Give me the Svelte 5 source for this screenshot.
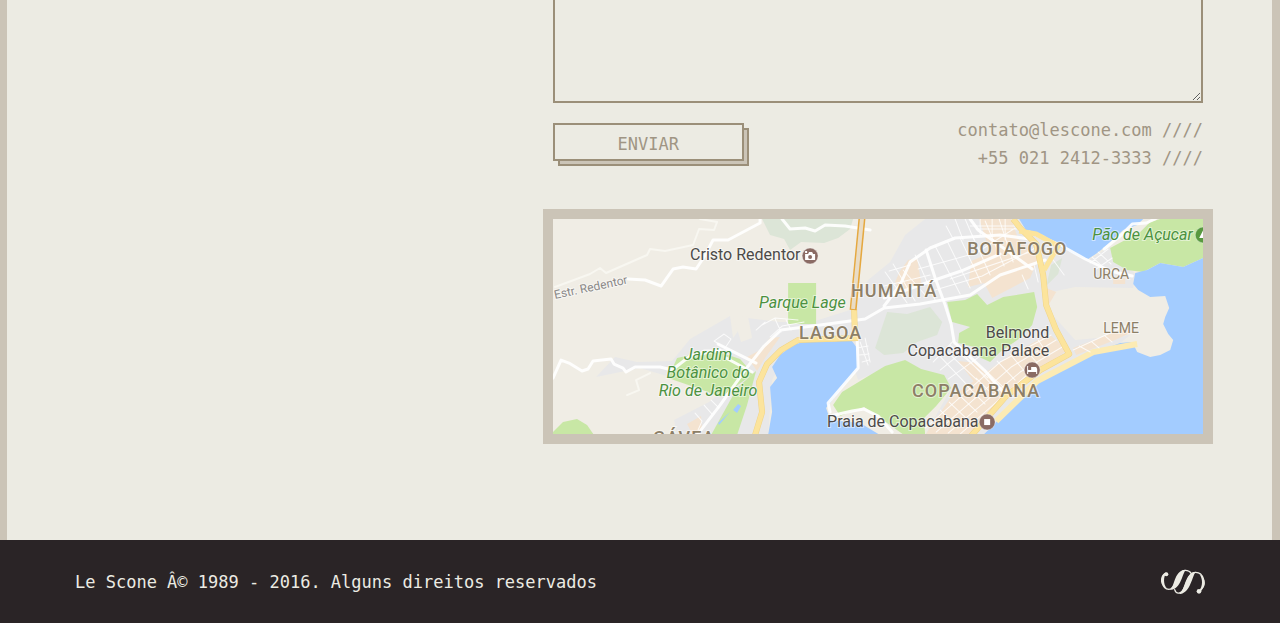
<script lang="ts">
  let message = $state('');

  const roads = [
    'M553 378 L561 360 L569 363 L582 371 L588 369 L593 361 L611 359 L614 364 L623 368 L626 372 L635 367 L660 367 L672 370 L690 356 L720 350',
    'M628 279 L645 280 L661 286 L673 269 L683 267 L696 269 L704 257 L713 240 L728 240 L760 223 V219',
    'M782 219 L790 229 L805 228 L815 231 L825 225 L845 226 L870 230',
    'M697 435 L720 405 L745 370 L764 346 L781 330 L820 325 L865 319 L884 308 L920 304 L970 295 L1000 275 L1045 260',
    'M884 306 L900 285 L910 262 L930 248 L955 238 L1000 235 L1030 239',
    'M718 344 L756 363 M726 358 L752 372',
    'M857 338 L858 368 L828 403 L830 412',
    'M830 416 L852 411 L864 409 L878 416 L892 432',
    'M926 250 L935 278 L945 305 L951 324 L954 342 L984 370 L1003 392',
    'M1029 232 L1060 245 L1085 259 L1110 271 L1132 276',
    'M1104 249 L1121 235 L1132 224 L1146 223 L1155 219',
    'M884 298 L920 285 L961 271 L1000 254 M970 219 L978 230 L1006 250 L1032 269'
  ];

  const lanes = [
    'M770 337 L782 326 L804 322 M762 325 L775 318 L798 320 M756 330 L765 322 M775 319 L781 332 M786 320 L791 330',
    'M714 341 L724 334 L731 339 L725 348 Z M690 359 L704 350 L730 350',
    'M695 413 L702 421 L698 430 M704 405 L712 414 M711 400 L719 408',
    'M935 246 L960 294 M947 241 L970 288 M960 238 L981 283 M972 235 L990 275 M985 221 L1004 266 M999 219 L1013 262',
    'M955 219 L963 240 M946 226 L953 239 M965 219 L974 240 M980 219 V235 M992 219 V237 M1005 219 V240',
    'M970 226 H1016 M976 229 H1018 M918 269 L976 253 L1015 228 M935 290 L982 276 L1035 248 M950 279 L1030 252',
    'M885 272 L907 303 M893 264 L915 301 M903 270 L925 295 M915 255 L935 300 M880 287 L930 275 M889 271 L910 265',
    'M860 342 L868 365 M865 338 L870 362 M857 348 L868 346 M859 355 L869 354 M862 362 L869 360',
    'M934 350 L968 386 M942 347 L977 380 M950 345 L988 378 M963 354 L994 387 M933 362 L954 340 M940 370 L967 348 M948 379 L980 356',
    'M925 428 L1000 362 L1051 335 M936 432 L1011 367 L1056 340 M948 433 L1020 372 L1062 347 M960 434 L1030 372',
    'M940 410 L958 428 M949 402 L968 420 M958 394 L977 412 M967 386 L985 404 M976 378 L994 396 M985 370 L1005 389 M997 361 L1015 380 M1010 354 L1024 371 M1023 347 L1037 363 M1038 340 L1049 356',
    'M1073 350 L1125 326 M1079 346 L1090 352 M1092 342 L1099 348 M1105 336 L1112 342',
    'M1092 257 L1103 267 M1098 252 L1111 264 M1090 263 L1108 249 M1096 269 L1112 258',
    'M1022 275 L1028 289 M1034 265 L1038 282 M1053 260 L1064 275'
  ];
</script>

<div class="page">
  <main class="sheet">
    <section class="contact">
      <form class="form" onsubmit={(e) => e.preventDefault()}>
        <textarea aria-label="Mensagem" bind:value={message}></textarea>
        <div class="actions">
          <button type="submit">ENVIAR</button>
          <address>
            <a href="mailto:contato@lescone.com">contato@lescone.com ////</a>
            <a href="tel:+552124123333">+55 021 2412-3333 ////</a>
          </address>
        </div>
      </form>

      <svg class="map" viewBox="553 219 650 215" role="img" aria-label="Mapa">
        <rect x="553" y="219" width="650" height="216" fill="#f0ede5" />

        <!-- built-up areas -->
        <g fill="#e8e8e9">
          <path d="M596 377 L615 357 L637 362 L672 361 L690 339 L730 316 L733 338 L747 318 L780 322 L812 322 L853 309 L868 280 L890 262 L905 235 L925 219 H1019 L1035 232 L1060 247 L1088 260 L1110 247 L1135 274 L1133 288 L1075 287 L1052 292 L1048 310 L1075 340 L1130 335 L1120 343 L1063 367 L1000 418 L983 435 H925 L950 390 L905 360 L858 380 L845 340 L790 346 L772 380 L768 435 H677 L674 420 L709 402 L748 370 L670 377 L640 368 Z" />
          <path d="M733 316 L741 342 L752 338 L748 317 Z" fill="#f0ede5" />
        </g>

        <!-- commercial blocks -->
        <g fill="#f4e3d0">
          <path d="M979 219 H1011 L1018 239 L1038 258 L1030 278 L992 298 L984 283 L968 287 L971 261 L990 253 Z" />
          <path d="M900 271 L908 260 L917 258 L921 283 L902 296 L895 282 Z" />
          <path d="M747 357 L760 350 L770 338 L780 337 L765 358 L757 371 Z M687 424 L701 416 L702 432 L693 435 Z" />
          <path d="M925 435 L950 398 L985 373 L1010 355 L1049 334 L1067 350 L1035 374 L1006 392 L970 435 Z M958 361 L977 363 L991 381 L980 390 Z" />
          <path d="M1073 348 L1125 328 L1132 332 L1115 340 L1076 355 Z M1113 278 H1125 V284 H1113 Z M1046 288 L1056 292 L1049 304 Z" />
        </g>

        <!-- woods and parks -->
        <g fill="#dce5d7">
          <path d="M762 219 H853 L850 229 L838 238 L824 243 L801 242 L790 250 L784 239 L770 235 Z" />
          <path d="M875 348 L887 312 L907 314 L930 307 L942 322 L937 335 L917 342 L903 353 L884 355 Z" />
          <path d="M1051 265 L1062 258 L1058 274 L1046 286 Z" />
        </g>
        <g fill="#c8e7a5">
          <path d="M788 283 H816 V324 H788 Z" />
          <path d="M833 405 L842 392 L870 375 L885 366 L905 360 L921 369 L944 375 L951 388 L936 406 L924 418 L925 435 H904 L880 418 L864 407 L840 416 Z" />
          <path d="M947 302 L965 300 L977 294 L987 305 L1003 297 L1034 292 L1037 307 L1032 325 L1020 338 L1000 352 L990 362 L979 357 L974 347 L958 343 L959 333 L970 327 L952 322 Z" />
          <path d="M1160 219 L1150 222 L1140 232 L1110 248 L1113 262 L1127 270 L1143 272 L1160 263 L1183 267 L1203 258 V219 Z" />
          <path d="M553 432 L563 422 L577 419 L587 425 L594 435 H553 Z" />
          <path d="M668 378 L677 358 L713 350 L740 359 L753 374 L721 397 L697 388 Z" />
          <path d="M711 435 L737 388 L756 371 L747 405 L737 435 Z" />
        </g>

        <!-- water -->
        <g fill="#a3ccff">
          <path d="M1019 219 L1027 232 L1043 235 L1060 247 L1080 257 L1088 259 L1097 253 L1107 245 L1123 230 L1137 225 L1143 219 Z" />
          <path d="M1203 258 L1183 267 L1160 263 L1147 270 L1135 273 L1133 284 L1138 290 L1150 297 L1165 296 L1169 308 L1165 317 L1163 324 L1168 334 L1173 340 L1170 350 L1160 355 L1150 357 L1137 352 L1132 342 L1120 343 L1093 353 L1063 368 L1037 383 L1017 399 L1000 418 L983 435 H1203 Z" />
          <path d="M768 435 L772 412 L770 387 L777 378 L772 367 L780 355 L793 345 L810 340 L827 342 L851 340 L857 348 L858 368 L840 390 L826 408 L830 420 L860 423 L880 435 Z" />
          <path d="M733 410 L738 404 L741 406 L737 413 Z M718 423 L730 412 L719 425 Z" />
        </g>
        <path d="M1137 344 L1093 352 L1037 381 L996 421" fill="none" stroke="#fcebb4" stroke-width="6" />

        <!-- streets -->
        <g fill="none" stroke="#fff" stroke-linejoin="round" stroke-linecap="round">
          {#each lanes as d}
            <path {d} stroke-width="1" stroke-opacity="0.8" />
          {/each}
          {#each roads as d}
            <path {d} stroke-width="3" stroke-opacity="0.9" />
          {/each}
          <path d="M555 287 L590 274 L600 268 L606 273 L647 255 L650 249 L665 251 L693 245 L699 229 L714 230 L717 222 L700 219" stroke="#f8f7f1" stroke-width="2" />
          <path d="M627 395 L639 390 L636 380 L650 373" stroke="#f8f7f1" stroke-width="2" />
        </g>
        <g fill="none" stroke-linejoin="round">
          <g stroke="#f0d489" stroke-width="6">
            <path d="M755 435 L762 412 L759 382 L767 364 L781 350 L798 340 L826 339 L858 338 M854 309 L855 340" />
            <path d="M1013 219 L1020 228 L1036 244 L1043 275 L1046 305 L1056 330 L1069 354 L1040 370 L1006 396 L970 437" />
          </g>
          <g stroke="#fce49c" stroke-width="5">
            <path d="M755 435 L762 412 L759 382 L767 364 L781 350 L798 340 L826 339 L858 338 M854 309 L855 340" />
            <path d="M1013 219 L1020 228 L1036 244 L1043 275 L1046 305 L1056 330 L1069 354 L1040 370 L1006 396 L970 437 M1019 231 L1036 234 L1058 246 L1044 270" />
          </g>
          <path d="M862 217 L853 310" stroke="#e5a83f" stroke-width="7" />
          <path d="M862 217 L853 309" stroke="#e9dcc6" stroke-width="4" />
        </g>

        <!-- labels -->
        <g class="place">
          <text x="690" y="260">Cristo Redentor</text>
          <text x="1049" y="338" text-anchor="end">Belmond</text>
          <text x="1049" y="356" text-anchor="end">Copacabana Palace</text>
          <text x="827" y="427">Praia de Copacabana</text>
        </g>
        <g class="park">
          <text x="759" y="308">Parque Lage</text>
          <text x="1092" y="240">Pão de Açucar</text>
          <text x="708" y="360" text-anchor="middle">Jardim</text>
          <text x="708" y="378" text-anchor="middle">Botânico do</text>
          <text x="708" y="396" text-anchor="middle">Rio de Janeiro</text>
        </g>
        <g class="district">
          <text x="967" y="255">BOTAFOGO</text>
          <text x="851" y="297">HUMAITÁ</text>
          <text x="799" y="339">LAGOA</text>
          <text x="912" y="397">COPACABANA</text>
          <text x="653" y="444">GÁVEA</text>
        </g>
        <g class="quarter">
          <text x="1093" y="279">URCA</text>
          <text x="1103" y="333">LEME</text>
        </g>
        <text class="street" transform="translate(555 299) rotate(-12)">Estr. Redentor</text>

        <!-- markers -->
        <g fill="#8a6b64" stroke="#fff" stroke-opacity="0.4">
          <circle cx="810" cy="256" r="8" />
          <circle cx="1032" cy="370" r="8" />
          <circle cx="987" cy="422" r="8" />
          <circle cx="1203" cy="235" r="8" fill="#58993f" />
        </g>
        <g fill="#fff">
          <path d="M805 254 h3 l1 -2 h3 l1 2 h2 v6 h-10 Z M805 251 h2 v2 h-2 Z" />
          <path d="M1027 366 h1 v4 h3 v-3 h5 l1 2 v5 h-1 v-2 h-8 v2 h-1 Z" />
          <rect x="984" y="419" width="6" height="6" />
          <path d="M1199 238 L1203 230 L1207 238 Z" />
        </g>
        <g fill="#8a6b64">
          <circle cx="810" cy="257" r="2" />
          <circle cx="1029" cy="368" r="1" />
        </g>
      </svg>
    </section>
  </main>

  <footer>
    <p>Le Scone Â© 1989 - 2016. Alguns direitos reservados</p>
    <svg class="logo" viewBox="0 0 132 78" role="img" aria-label="Le Scone">
      <g fill="none" stroke="#ecebe3" stroke-linecap="round">
        <path d="M14 13 C-1 20 0 60 24 61 C48 61 47 4 72 4 C82 4 88 8 91 14" stroke-width="4" />
        <path d="M41 62 C45 76 60 77 69 58 C80 34 84 10 104 10 C128 10 137 44 118 66" stroke-width="4" />
      </g>
      <g fill="#ecebe3">
        <path d="M24 63 C43 57 36 5 74 2 C61 21 60 62 24 63 Z" />
        <path d="M53 75 C75 65 68 13 104 8 C91 28 87 75 53 75 Z" />
        <path d="M17 10 C7 23 6 45 17 58 C-6 50 -6 17 17 10 Z" />
        <path d="M115 14 C127 31 125 54 113 66 C138 59 137 28 115 14 Z" />
        <circle cx="16" cy="16" r="6" />
        <circle cx="114" cy="67" r="7" />
      </g>
    </svg>
  </footer>
</div>

<style>
  :global(body) {
    margin: 0;
    background: #2a2426;
  }

  .page {
    font: 17px/28px "DejaVu Sans Mono", monospace;
    color: #a09584;
  }

  .sheet {
    padding: 0 69px 96px 68px;
    background: #ecebe3;
    border: solid #cbc4b7;
    border-width: 0 8px 0 7px;
  }

  .contact {
    width: 58%;
    margin-left: auto;
    box-sizing: border-box;
  }

  .form {
    padding-left: 4px;
  }

  textarea {
    display: block;
    box-sizing: border-box;
    width: 100%;
    height: 103px;
    padding: 12px;
    border: 2px solid #9b8f79;
    border-top: 0;
    background: transparent;
    color: inherit;
    font: inherit;
    outline: 0;
    resize: vertical;
  }

  .actions {
    display: flex;
    justify-content: space-between;
    align-items: flex-start;
    padding-top: 13px;
  }

  button {
    width: 191px;
    height: 38px;
    margin-top: 7px;
    padding: 4px 0 0;
    border: 2px solid #9b8f79;
    background: #ecebe3;
    box-shadow: 5px 5px 0 -2px #cbc4b7, 5px 5px 0 0 #9b8f79;
    color: inherit;
    font: inherit;
    cursor: pointer;
  }

  address {
    display: flex;
    flex-direction: column;
    align-items: flex-end;
    font-style: normal;
  }

  a {
    color: inherit;
    text-decoration: none;
  }

  .map {
    display: block;
    box-sizing: content-box;
    width: calc(100% - 4px);
    margin: 37px -10px 0 -6px;
    border: 10px solid #cbc4b7;
  }

  .map text {
    font-family: Roboto, sans-serif;
    paint-order: stroke;
    stroke: #fff;
    stroke-opacity: 0.5;
    stroke-width: 2px;
  }

  .place {
    font-size: 16px;
    fill: #4c4a49;
  }

  .park {
    font-size: 16px;
    font-style: italic;
    fill: #4b9140;
  }

  .district {
    font-size: 18px;
    font-weight: 500;
    letter-spacing: 1px;
    fill: #8d7f67;
  }

  .quarter {
    font-size: 14px;
    fill: #8d7f67;
  }

  .street {
    font-size: 12px;
    fill: #8b8988;
  }

  footer {
    display: flex;
    justify-content: space-between;
    align-items: center;
    min-height: 83px;
    padding: 0 75px;
    background: #2a2426;
    color: #ecebe3;
  }

  footer p {
    margin: 0;
  }

  .logo {
    width: 44px;
    height: 26px;
  }
</style>
